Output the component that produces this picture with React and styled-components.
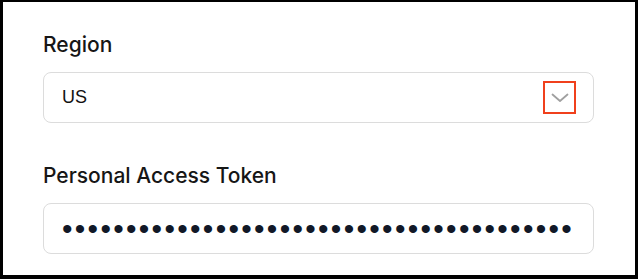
import React from 'react'
import styled, { createGlobalStyle } from 'styled-components'

const GlobalStyle = createGlobalStyle`
  html, body {
    margin: 0;
    padding: 0;
    background: #ffffff;
  }
  * { box-sizing: border-box; }
`

const Frame = styled.div`
  width: 638px;
  height: 279px;
  border-style: solid;
  border-color: #000;
  border-width: 2px 3px 4px 3px;
  background: #fff;
  padding: 30px 40px 0 40px;
  display: flex;
  flex-direction: column;
  overflow: hidden;
`

const Field = styled.div`
  display: flex;
  flex-direction: column;
  gap: 14px;
  margin-bottom: ${({ $spacing }) => $spacing || 0}px;
`

const Label = styled.label`
  font-family: Inter, "Noto Sans", sans-serif;
  font-weight: 500;
  font-size: 21px;
  line-height: 26px;
  color: #161616;
`

const Box = styled.div`
  position: relative;
  height: 51px;
  width: 551px;
  border: 1px solid #dcdcdc;
  border-radius: 8px;
  display: flex;
  align-items: center;
  justify-content: space-between;
  padding: 0 18px;
  overflow: hidden;
`

const Value = styled.span`
  font-family: "Liberation Sans", Arial, sans-serif;
  font-size: 18px;
  color: #111;
`

const Chevron = styled.div`
  width: 33px;
  height: 33px;
  border: 2px solid #f0401c;
  display: flex;
  align-items: center;
  justify-content: center;
  margin-right: -1px;
`

const Dots = styled.span`
  font-family: "Liberation Sans", Arial, sans-serif;
  font-size: 30px;
  line-height: 30px;
  letter-spacing: 2.3px;
  white-space: nowrap;
  color: #111827;
`

export default function App() {
  return (
    <>
      <GlobalStyle />
      <Frame>
        <Field $spacing={40}>
          <Label>Region</Label>
          <Box>
            <Value>US</Value>
            <Chevron>
              <svg width="18" height="10" viewBox="0 0 18 10" fill="none">
                <path d="M1.5 1.5 L9 8 L16.5 1.5" stroke="#a0a0a0" strokeWidth="1.8" strokeLinecap="round" strokeLinejoin="round" />
              </svg>
            </Chevron>
          </Box>
        </Field>
        <Field>
          <Label>Personal Access Token</Label>
          <Box>
            <Dots>{'•'.repeat(40)}</Dots>
          </Box>
        </Field>
      </Frame>
    </>
  )
}
